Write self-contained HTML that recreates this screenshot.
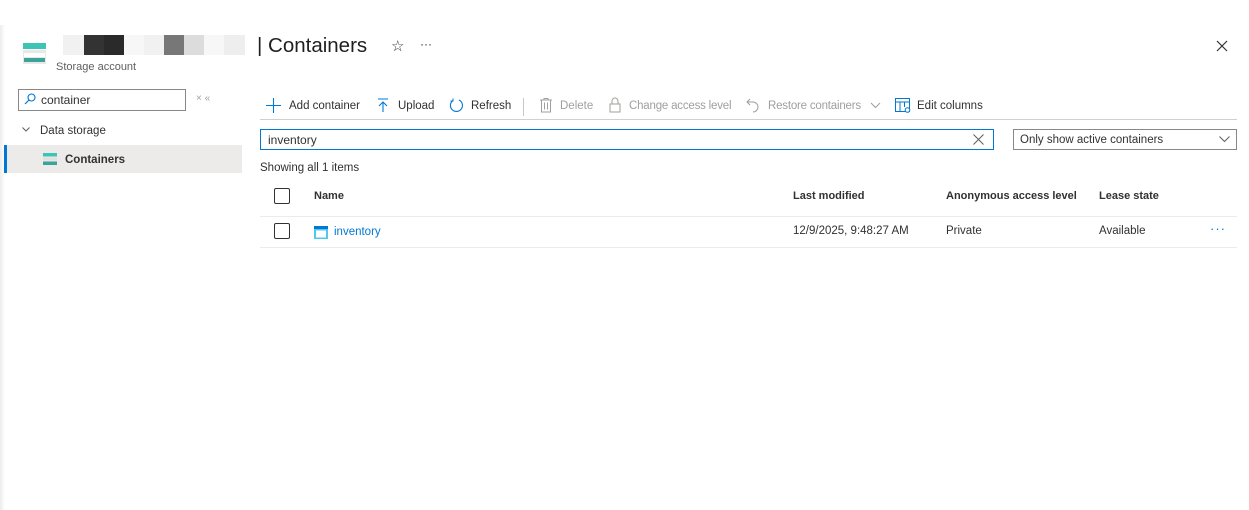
<!DOCTYPE html>
<html><head><meta charset="utf-8"><style>
*{box-sizing:border-box;margin:0;padding:0}
body{width:1249px;height:510px;background:#fff;font-family:"Liberation Sans",sans-serif;color:#323130;position:relative;overflow:hidden;font-size:12px}
.a{position:absolute}
.shadow{left:0;top:25px;width:5px;height:485px;background:linear-gradient(to right,#ececec,#fff)}
.blk{position:absolute;top:35px;height:20px}
.tb{top:100px;font-size:11.5px;color:#323130;white-space:nowrap}
.dis{color:#a19f9d}
.hd{font-weight:bold;font-size:11px;top:190px;color:#323130}
.cb{width:16px;height:16px;border:1px solid #323130;border-radius:2px}
</style></head><body>
<div class="a shadow"></div>
<svg class="a" style="left:23px;top:43px" width="24" height="22" viewBox="0 0 24 22"><rect x="0" y="0" width="23" height="6" fill="#3cc4b4"/><rect x="0" y="7" width="23" height="14" fill="#e8e8e8"/><rect x="1" y="10" width="21" height="4" fill="#fff"/><rect x="1" y="15" width="21" height="4" fill="#3aa39a"/></svg>
<div class="blk" style="left:63px;width:21px;background:#f1f1f1"></div>
<div class="blk" style="left:84px;width:20px;background:#333"></div>
<div class="blk" style="left:104px;width:20px;background:#2a2a2a"></div>
<div class="blk" style="left:124px;width:20px;background:#f7f7f7"></div>
<div class="blk" style="left:144px;width:20px;background:#f1f1f1"></div>
<div class="blk" style="left:164px;width:20px;background:#777"></div>
<div class="blk" style="left:184px;width:20px;background:#dcdcdc"></div>
<div class="blk" style="left:204px;width:20px;background:#f7f7f7"></div>
<div class="blk" style="left:224px;width:21px;background:#eee"></div>
<div class="a" style="left:56px;top:61px;font-size:11px;color:#605e5c">Storage account</div>
<div class="a" style="left:257px;top:34px;font-size:20.5px;color:#201f1e">| Containers</div>
<div class="a" style="left:391px;top:37px;font-size:15px">☆</div>
<div class="a" style="left:420px;top:37px;font-size:12px">···</div>
<svg class="a" style="left:1216px;top:40px" width="12" height="12"><path d="M1 1L11 11M11 1L1 11" stroke="#323130" stroke-width="1.2"/></svg>
<div class="a" style="left:18px;top:89px;width:168px;height:22px;border:1px solid #8a8886"></div>
<svg class="a" style="left:24px;top:93px" width="12" height="12"><circle cx="7.5" cy="4.5" r="3.5" fill="none" stroke="#0078d4" stroke-width="1.1"/><path d="M5 7L1 11" stroke="#0078d4" stroke-width="1.2"/></svg>
<div class="a" style="left:41px;top:93px;font-size:12px">container</div>
<div class="a" style="left:196px;top:93px;font-size:10px;color:#a19f9d">× «</div>
<svg class="a" style="left:22px;top:127px" width="8" height="5"><path d="M0.5 0.5L4 4L7.5 0.5" stroke="#605e5c" fill="none"/></svg>
<div class="a" style="left:40px;top:125px;font-size:11.5px">Data storage</div>
<div class="a" style="left:4px;top:145px;width:238px;height:28px;background:#edebe9;border-left:3px solid #0078d4"></div>
<svg class="a" style="left:43px;top:153px" width="14" height="12"><rect width="14" height="3.5" fill="#3cc4b4"/><rect y="4.5" width="14" height="3" fill="#e0e0e0"/><rect y="8.5" width="14" height="3.5" fill="#3aa39a"/></svg>
<div class="a" style="left:65px;top:154px;font-size:11.5px;font-weight:bold">Containers</div>
<svg class="a" style="left:266px;top:98px" width="15" height="15"><path d="M7.5 0V15M0 7.5H15" stroke="#0078d4" stroke-width="1.1"/></svg>
<div class="a tb" style="left:289px">Add container</div>
<svg class="a" style="left:377px;top:98px" width="12" height="15"><path d="M1 1H11M6 4V14M2 8L6 4L10 8" stroke="#0078d4" fill="none" stroke-width="1.1"/></svg>
<div class="a tb" style="left:398px">Upload</div>
<svg class="a" style="left:449px;top:98px" width="15" height="15"><path d="M4 2.5A6 6 0 1 0 10 2" stroke="#0078d4" fill="none" stroke-width="1.1"/><path d="M4 0.5V3H1.5" stroke="#0078d4" fill="none"/></svg>
<div class="a tb" style="left:471px">Refresh</div>
<div class="a" style="left:523px;top:98px;width:1px;height:18px;background:#c8c6c4"></div>
<svg class="a" style="left:540px;top:98px" width="12" height="15"><path d="M0 2H12M4 2V0.5H8V2M1.5 2V14H10.5V2M4.5 4.5V11.5M7.5 4.5V11.5" stroke="#a19f9d" fill="none"/></svg>
<div class="a tb dis" style="left:560px">Delete</div>
<svg class="a" style="left:609px;top:97px" width="12" height="16"><path d="M3 7V4A3 3 0 0 1 9 4V7M1 7H11V15H1Z" stroke="#a19f9d" fill="none"/></svg>
<div class="a tb dis" style="left:629px;letter-spacing:-0.2px">Change access level</div>
<svg class="a" style="left:746px;top:98px" width="14" height="15"><path d="M4 1L1 4L4 7M1 4H7A5 5 0 0 1 7 14" stroke="#a19f9d" fill="none"/></svg>
<div class="a tb dis" style="left:768px;letter-spacing:-0.2px">Restore containers</div>
<svg class="a" style="left:870px;top:102px" width="11" height="7"><path d="M1 1L5.5 5.5L10 1" stroke="#a19f9d" fill="none"/></svg>
<svg class="a" style="left:895px;top:98px" width="16" height="15"><rect x="0.5" y="0.5" width="14" height="13" stroke="#0078d4" fill="none"/><path d="M0.5 4H14.5M5 4V13.5M9.5 4V9" stroke="#0078d4"/><circle cx="12.5" cy="12" r="2.3" fill="#fff" stroke="#0078d4"/></svg>
<div class="a tb" style="left:917px">Edit columns</div>
<div class="a" style="left:260px;top:119px;width:977px;height:1px;background:#d2d0ce"></div>
<div class="a" style="left:260px;top:129px;width:734px;height:21px;border:1px solid #0078d4"></div>
<div class="a" style="left:268px;top:133px;font-size:12px">inventory</div>
<svg class="a" style="left:973px;top:134px" width="11" height="11"><path d="M0.5 0.5L10.5 10.5M10.5 0.5L0.5 10.5" stroke="#605e5c"/></svg>
<div class="a" style="left:1013px;top:129px;width:224px;height:21px;border:1px solid #8a8886"></div>
<div class="a" style="left:1020px;top:134px;font-size:11.5px">Only show active containers</div>
<svg class="a" style="left:1219px;top:136px" width="11" height="7"><path d="M0.5 0.5L5.5 5.5L10.5 0.5" stroke="#605e5c" fill="none"/></svg>
<div class="a" style="left:260px;top:162px;font-size:11.5px">Showing all 1 items</div>
<div class="a cb" style="left:274px;top:188px"></div>
<div class="a hd" style="left:314px">Name</div>
<div class="a hd" style="left:793px">Last modified</div>
<div class="a hd" style="left:946px">Anonymous access level</div>
<div class="a hd" style="left:1099px">Lease state</div>
<div class="a" style="left:260px;top:216px;width:977px;height:1px;background:#edebe9"></div>
<div class="a cb" style="left:274px;top:223px"></div>
<svg class="a" style="left:314px;top:226px" width="14" height="13"><rect width="14" height="13" fill="#50c8f0"/><rect y="0" width="14" height="3" fill="#0078d4"/><rect x="2" y="4.5" width="10" height="7" fill="#fff"/></svg>
<div class="a" style="left:334px;top:226px;font-size:11.5px;color:#0078d4">inventory</div>
<div class="a" style="left:793px;top:225px;font-size:11.5px">12/9/2025, 9:48:27 AM</div>
<div class="a" style="left:946px;top:225px;font-size:11.5px">Private</div>
<div class="a" style="left:1099px;top:225px;font-size:11.5px">Available</div>
<div class="a" style="left:1210px;top:221px;font-size:13px;color:#0078d4;letter-spacing:1px">···</div>
<div class="a" style="left:260px;top:247px;width:977px;height:1px;background:#edebe9"></div>
</body></html>
